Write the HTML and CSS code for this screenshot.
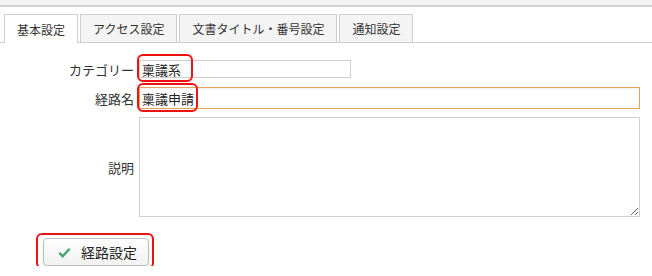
FILE: index.html
```html
<!DOCTYPE html>
<html lang="ja">

<head>
    <meta charset="UTF-8">
    <title>経路設定</title>
    <link rel="stylesheet" href="styles.css">
</head>

<body>
    <div class="top-bar"></div>

    <div class="tabs">
        <div class="tab active">基本設定</div>
        <div class="tab">アクセス設定</div>
        <div class="tab">文書タイトル・番号設定</div>
        <div class="tab">通知設定</div>
    </div>

    <div class="form">
        <label class="form-label">カテゴリー</label>
        <div class="field">
            <input class="input input-short" type="text" value="稟議系">
            <span class="mark mark-category"></span>
        </div>

        <label class="form-label">経路名</label>
        <div class="field">
            <input class="input input-long focused" type="text" value="稟議申請">
            <span class="mark mark-name"></span>
        </div>

        <label class="form-label">説明</label>
        <div class="field">
            <textarea class="textarea"></textarea>
        </div>
    </div>

    <div class="actions">
        <div class="field">
            <button class="btn" type="button">
                <svg class="btn-icon" viewBox="0 0 16 16">
                    <path d="M2.5 8.5l3.5 3.5 7.5-8" fill="none" stroke="#45a36f" stroke-width="2.6" />
                </svg>
                経路設定
            </button>
            <span class="mark mark-button"></span>
        </div>
    </div>
</body>

</html>
```

FILE: styles.css
```css
body {
    margin: 0;
    background: white;
    font-family: "Noto Sans CJK JP", "Noto Sans", sans-serif;
    color: #333;
}

.top-bar {
    height: 5px;
    background: #f3f3f3;
    border-bottom: 2px solid #d2d2d2;
}

.tabs {
    display: flex;
    gap: 2px;
    padding: 7px 0 0 4px;
    border-bottom: 1px solid #cfcfcf;
}

.tab {
    height: 28px;
    box-sizing: border-box;
    padding: 0 12px;
    display: flex;
    align-items: center;
    font-size: 12px;
    color: #333;
    background: #f4f4f4;
    border: 1px solid #cfcfcf;
    border-bottom: none;
}

.tab.active {
    background: white;
    height: 29px;
    margin-bottom: -1px;
}

.form {
    display: grid;
    grid-template-columns: 134px 1fr;
    column-gap: 5px;
    row-gap: 8px;
    padding: 17px 12px 0 0;
}

.form-label {
    display: flex;
    align-items: center;
    justify-content: flex-end;
    font-size: 13px;
    color: #333;
}

.field {
    position: relative;
    display: flex;
}

.input {
    box-sizing: border-box;
    font-family: inherit;
    font-size: 13px;
    color: #222;
    border: 1px solid #cfcfcf;
    padding: 0 2px;
    outline: none;
    background: white;
}

.input-short {
    width: 212px;
    height: 18px;
}

.input-long {
    width: 501px;
    height: 22px;
}

.input.focused {
    border-color: #e3a35c;
    box-shadow: inset 0 1px 2px rgb(0 0 0 / 0.06);
}

.textarea {
    box-sizing: border-box;
    width: 501px;
    height: 100px;
    border: 1px solid #cfcfcf;
    resize: vertical;
    font-family: inherit;
    margin: 0;
}

.actions {
    padding: 21px 0 0 43px;
}

.btn {
    display: flex;
    align-items: center;
    gap: 9px;
    width: 106px;
    height: 28px;
    box-sizing: border-box;
    padding: 0 0 0 13px;
    font-family: inherit;
    font-size: 14px;
    color: #222;
    background: linear-gradient(#fefefe, #f1f1f1);
    border: 1px solid #bdbdbd;
    border-radius: 4px;
    box-shadow: 0 1px 2px rgb(0 0 0 / 0.12);
}

.btn-icon {
    width: 15px;
    height: 15px;
}

.mark {
    position: absolute;
    border: 2px solid #ee1111;
    border-radius: 6px;
    pointer-events: none;
}

.mark-category {
    left: -2px;
    top: -6px;
    width: 52px;
    height: 24px;
}

.mark-name {
    left: -2px;
    top: -4px;
    width: 57px;
    height: 25px;
}

.mark-button {
    left: -7px;
    top: -5px;
    width: 114px;
    height: 32px;
}
```
